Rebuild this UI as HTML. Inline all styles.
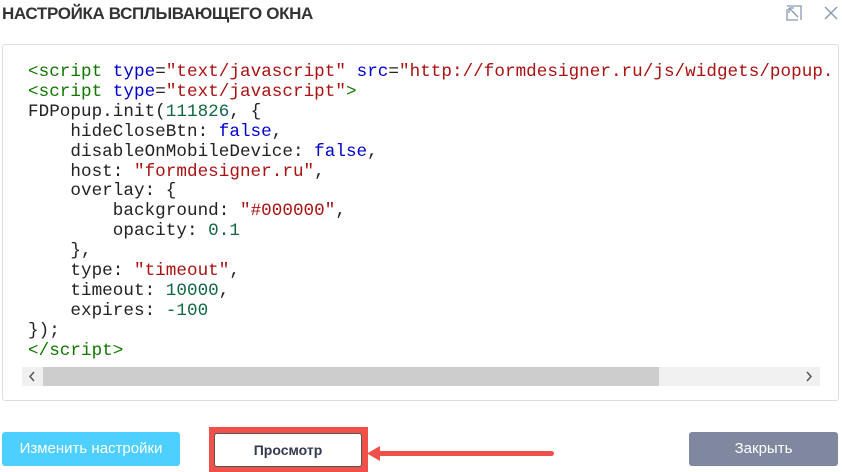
<!DOCTYPE html>
<html><head><meta charset="utf-8"><style>
body{margin:0;width:842px;height:472px;background:#fff;position:relative;overflow:hidden;font-family:"Liberation Sans",sans-serif}
.t{position:absolute;left:2px;top:4px;font-size:17px;font-weight:bold;color:#333;letter-spacing:-0.35px}
.box{position:absolute;left:2px;top:44px;width:835px;height:355px;border:1px solid #ddd;border-radius:3px}
pre{position:absolute;left:28px;top:63px;margin:0;font-family:"Liberation Mono",monospace;font-size:17.6px;line-height:19.9px;color:#222;letter-spacing:0.04px}
.g{color:#117700}.b{color:#0000cc}.r{color:#aa1111}.n{color:#116644}
.sb{position:absolute;left:22px;top:367px;width:798px;height:19px;background:#f0f0f0}
.th{position:absolute;left:43px;top:367px;width:616px;height:19px;background:#cdcdcd}
.btn{position:absolute;top:432px;height:34px;border-radius:3px;font-size:15px;line-height:34px;text-align:center;color:#fff}
</style></head><body>
<div class="t">НАСТРОЙКА ВСПЛЫВАЮЩЕГО ОКНА</div>
<svg style="position:absolute;left:786px;top:5px" width="16" height="16"><path d="M1 1h14v14" fill="none" stroke="#8a99b4" stroke-width="1.3"/><path d="M1 4v11h11M3 3l9 9M3 3v5M3 3h5" fill="none" stroke="#8a99b4" stroke-width="1.3"/></svg>
<svg style="position:absolute;left:823px;top:5px" width="16" height="16"><path d="M2 2l12 12M14 2L2 14" stroke="#8a99b4" stroke-width="1.4"/></svg>
<div class="box"></div>
<pre><span class="g">&lt;script</span> <span class="b">type</span>=<span class="r">"text/javascript"</span> <span class="b">src</span>=<span class="r">"http://formdesigner.ru/js/widgets/popup.</span>
<span class="g">&lt;script</span> <span class="b">type</span>=<span class="r">"text/javascript"</span><span class="g">&gt;</span>
FDPopup.init(<span class="n">111826</span>, {
    hideCloseBtn: <span class="b">false</span>,
    disableOnMobileDevice: <span class="b">false</span>,
    host: <span class="r">"formdesigner.ru"</span>,
    overlay: {
        background: <span class="r">"#000000"</span>,
        opacity: <span class="n">0.1</span>
    },
    type: <span class="r">"timeout"</span>,
    timeout: <span class="n">10000</span>,
    expires: <span class="n">-100</span>
});
<span class="g">&lt;/script&gt;</span></pre>
<div class="sb"></div><div class="th"></div>
<svg style="position:absolute;left:28px;top:371px" width="8" height="11"><path d="M6 1L2 5.5 6 10" fill="none" stroke="#555" stroke-width="1.5"/></svg>
<svg style="position:absolute;left:805px;top:371px" width="8" height="11"><path d="M2 1l4 4.5L2 10" fill="none" stroke="#555" stroke-width="1.5"/></svg>
<div class="btn" style="left:2px;width:178px;background:#4dcfff">Изменить настройки</div>
<div style="position:absolute;left:209px;top:427px;width:159px;height:45px;background:#f0504a"></div>
<div class="btn" style="left:214px;top:433px;width:146px;height:32px;line-height:32px;background:#fff;border:1px solid #555;color:#333a50;font-weight:bold;font-size:14px">Просмотр</div>
<div style="position:absolute;left:376px;top:451px;width:178px;height:5px;background:#f0504a;border-radius:3px"></div>
<svg style="position:absolute;left:366px;top:445px" width="16" height="17"><path d="M1 8.5L14 1v15z" fill="#f0504a"/></svg>
<div class="btn" style="left:689px;width:149px;background:#8088a0">Закрыть</div>
</body></html>
